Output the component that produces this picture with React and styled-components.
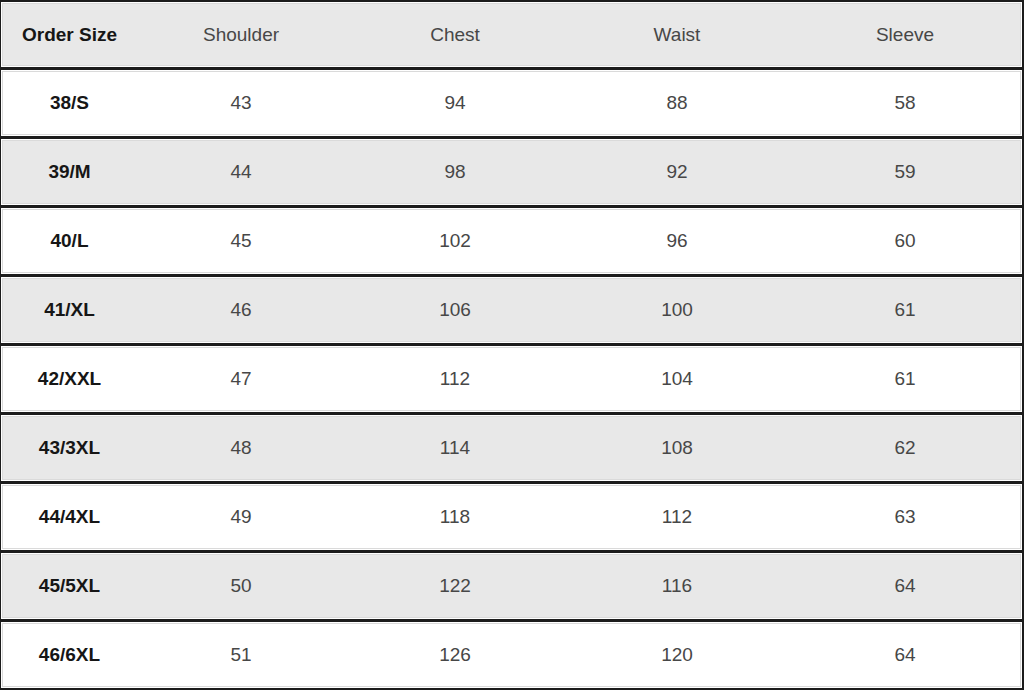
import styled, { createGlobalStyle } from "styled-components";

const GlobalStyle = createGlobalStyle`
  html, body {
    margin: 0;
    padding: 0;
    background: #ffffff;
  }
  body {
    font-family: "Liberation Sans", Arial, sans-serif;
  }
`;

const Table = styled.div`
  width: 1024px;
  height: 690px;
  box-sizing: border-box;
  border-top: 2px solid #1c1c1c;
  border-bottom: 2px solid #1c1c1c;
  border-left: 1px solid #1c1c1c;
  border-right: 2px solid #1c1c1c;
  display: flex;
  flex-direction: column;
  gap: 3px;
  background: #1c1c1c;
`;

const Row = styled.div`
  display: grid;
  grid-template-columns: 137px 206px 222px 222px 1fr;
  align-items: center;
  height: ${(p) => (p.$head ? "65px" : "66px")};
  flex-shrink: 0;
  background: ${(p) => (p.$shade ? "#e8e8e8" : "#ffffff")};
  box-shadow: inset 0 0 0 1px #ffffff, inset 0 0 0 2px #dadada;
`;

const Cell = styled.div`
  text-align: center;
  font-size: 19px;
  font-weight: ${(p) => (p.$bold ? 700 : 400)};
  color: ${(p) => (p.$bold ? "#161616" : "#474747")};
`;

const headers = ["Shoulder", "Chest", "Waist", "Sleeve"];

const rows = [
  ["38/S", 43, 94, 88, 58],
  ["39/M", 44, 98, 92, 59],
  ["40/L", 45, 102, 96, 60],
  ["41/XL", 46, 106, 100, 61],
  ["42/XXL", 47, 112, 104, 61],
  ["43/3XL", 48, 114, 108, 62],
  ["44/4XL", 49, 118, 112, 63],
  ["45/5XL", 50, 122, 116, 64],
  ["46/6XL", 51, 126, 120, 64],
];

const App = () => {
  return (
    <>
      <GlobalStyle />
      <Table>
        <Row $head $shade>
          <Cell $bold>Order Size</Cell>
          {headers.map((h) => (
            <Cell key={h}>{h}</Cell>
          ))}
        </Row>
        {rows.map((r, i) => (
          <Row key={r[0]} $shade={i % 2 === 1}>
            <Cell $bold>{r[0]}</Cell>
            {r.slice(1).map((v, j) => (
              <Cell key={j}>{v}</Cell>
            ))}
          </Row>
        ))}
      </Table>
    </>
  );
};

export default App;
